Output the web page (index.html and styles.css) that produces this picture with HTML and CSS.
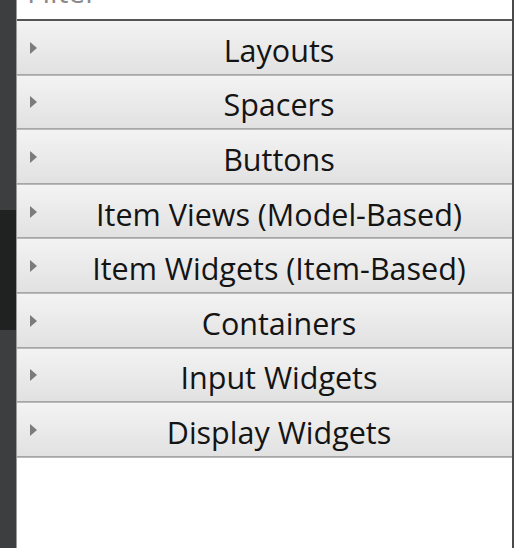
FILE: index.html
```html
<!DOCTYPE html>
<html>
<head>
<meta charset="utf-8">
<link rel="stylesheet" href="styles.css">
</head>
<body>
<div class="app">
  <div class="strip">
    <div class="strip-top"></div>
    <div class="strip-handle"></div>
    <div class="strip-rest"></div>
  </div>
  <div class="panel">
    <div class="filter"><span class="filter-text">Filter</span></div>
    <div class="rows">
      <div class="row"><span class="arrow"></span><span class="label">Layouts</span></div>
      <div class="row"><span class="arrow"></span><span class="label">Spacers</span></div>
      <div class="row"><span class="arrow"></span><span class="label">Buttons</span></div>
      <div class="row"><span class="arrow"></span><span class="label">Item Views (Model-Based)</span></div>
      <div class="row"><span class="arrow"></span><span class="label">Item Widgets (Item-Based)</span></div>
      <div class="row"><span class="arrow"></span><span class="label">Containers</span></div>
      <div class="row"><span class="arrow"></span><span class="label">Input Widgets</span></div>
      <div class="row"><span class="arrow"></span><span class="label">Display Widgets</span></div>
    </div>
  </div>
</div>
</body>
</html>
```
FILE: styles.css
```css
html, body {
  margin: 0;
  padding: 0;
  background: #ffffff;
}
body {
  width: 522px;
  height: 558px;
  overflow: hidden;
  font-family: "Open Sans", "Noto Sans", sans-serif;
}
.app {
  display: flex;
  height: 548px;
}
.strip {
  width: 16px;
  display: flex;
  flex-direction: column;
  background: #3d3e3f;
}
.strip-top { height: 210px; }
.strip-handle { height: 120px; background: #202121; }
.strip-rest { flex: 1; }
.panel {
  width: 495px;
  border-left: 1px solid #9a9a9a;
  border-right: 2px solid #4a4a4a;
  display: flex;
  flex-direction: column;
  background: #fff;
}
.filter {
  height: 19px;
  border-bottom: 2px solid #555;
  overflow: hidden;
  position: relative;
}
.filter-text {
  position: absolute;
  left: 10px;
  bottom: 12px;
  font-size: 30px;
  line-height: 30px;
  color: #8a8a8a;
}
.rows {
  display: flex;
  flex-direction: column;
}
.row {
  box-sizing: border-box;
  height: 54.6px;
  display: flex;
  align-items: center;
  background: linear-gradient(#f3f3f3, #e1e1e1);
  border-bottom: 1px solid #b9b9b9;
  box-shadow: inset 0 -1px 0 #a6a6a6;
}
.arrow {
  width: 0;
  height: 0;
  margin-left: 13px;
  border-top: 6px solid transparent;
  border-bottom: 6px solid transparent;
  border-left: 7px solid #7b7b7b;
}
.label {
  flex: 1;
  text-align: center;
  font-size: 30.5px;
  line-height: 36px;
  padding-top: 4px;
  color: #141414;
  padding-left: 9px;
}
```
